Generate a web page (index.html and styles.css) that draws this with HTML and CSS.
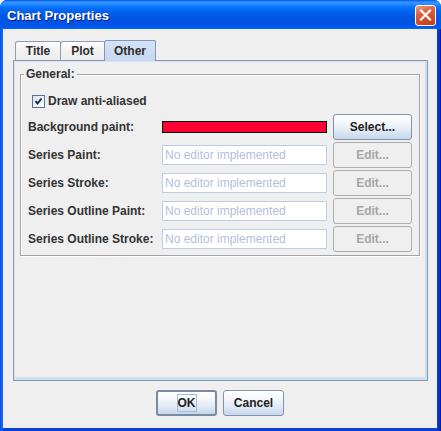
FILE: index.html
```html
<!DOCTYPE html>
<html lang="en">
<head>
<meta charset="utf-8">
<title>Chart Properties</title>
<link rel="stylesheet" href="styles.css">
</head>
<body>
<div class="window">
  <div class="titlebar">
    <span class="title">Chart Properties</span>
    <button class="close" aria-label="Close">
      <svg width="19" height="19" viewBox="0 0 19 19"><path d="M5 4.5 L14 13.5 M14 4.5 L5 13.5" stroke="#fff" stroke-width="2.2" stroke-linecap="square"/></svg>
    </button>
  </div>
  <div class="client">
    <div class="tabs">
      <div class="tab tab-title">Title</div>
      <div class="tab tab-plot">Plot</div>
      <div class="tab tab-other selected">Other</div>
    </div>
    <div class="panel">
      <fieldset class="group">
        <legend>General:</legend>
        <label class="check-row">
          <span class="checkbox"><svg width="11" height="11" viewBox="0 0 11 11"><path d="M2.5 5 L4.5 7.5 L8.5 2.5" fill="none" stroke="#1b2a44" stroke-width="2"/></svg></span>
          Draw anti-aliased
        </label>
        <div class="props">
          <span class="label">Background paint:</span>
          <span class="swatch"></span>
          <button class="btn">Select...</button>

          <span class="label">Series Paint:</span>
          <input class="field" type="text" value="No editor implemented" disabled>
          <button class="btn" disabled>Edit...</button>

          <span class="label">Series Stroke:</span>
          <input class="field" type="text" value="No editor implemented" disabled>
          <button class="btn" disabled>Edit...</button>

          <span class="label">Series Outline Paint:</span>
          <input class="field" type="text" value="No editor implemented" disabled>
          <button class="btn" disabled>Edit...</button>

          <span class="label">Series Outline Stroke:</span>
          <input class="field" type="text" value="No editor implemented" disabled>
          <button class="btn" disabled>Edit...</button>
        </div>
      </fieldset>
    </div>
    <div class="actions">
      <button class="btn action default"><span class="focus">OK</span></button>
      <button class="btn action">Cancel</button>
    </div>
  </div>
</div>
</body>
</html>
```
FILE: styles.css
```css
* { box-sizing: border-box; }

body {
  margin: 0;
  background: #ffffff;
  font-family: "Liberation Sans", Arial, sans-serif;
}

.window {
  width: 441px;
  height: 431px;
  display: flex;
  flex-direction: column;
  border-radius: 7px 7px 0 0;
  overflow: hidden;
  background: linear-gradient(to right, #0a4fe6 0, #0a4fe6 1px, #1563f2 1px, #1563f2 3px, #0a40d8 3px, #0a40d8 calc(100% - 4px), #0a3dd8 calc(100% - 4px), #002fc4 calc(100% - 1px), #001e9c calc(100% - 1px));
}

.titlebar {
  height: 29px;
  flex: none;
  display: flex;
  align-items: center;
  justify-content: space-between;
  padding: 2px 5px 0 7px;
  background: linear-gradient(to bottom, #0058ee 0%, #3a93ff 8%, #288eff 14%, #127dff 20%, #036ffc 28%, #0262ee 40%, #0057e5 60%, #0054e3 75%, #0055eb 90%, #005bf5 95%, #026afe 100%);
}

.title {
  color: #ffffff;
  font-weight: bold;
  font-size: 13px;
  text-shadow: 1px 1px 0 #0a1c80;
}

.close {
  width: 21px;
  height: 21px;
  padding: 0;
  margin: 0;
  border: 1px solid #ffffff;
  border-radius: 3px;
  background: linear-gradient(160deg, #f09a7c 0%, #e0603c 35%, #d24a26 70%, #c03a18 100%);
  display: flex;
  align-items: center;
  justify-content: center;
}

.client {
  flex: 1;
  display: flex;
  flex-direction: column;
  margin: 0 4px 3px 3px;
  padding: 11px 9px 12px 10px;
  background: #efefef;
}

.tabs {
  display: flex;
  align-items: flex-end;
  height: 20px;
  padding-left: 2px;
  position: relative;
  z-index: 1;
}

.tab {
  height: 19px;
  border: 1px solid #8c9db4;
  border-bottom: none;
  border-radius: 3px 2px 0 0;
  background: linear-gradient(to bottom, #ffffff, #f3f3f3 40%, #ececec);
  font-size: 12px;
  font-weight: bold;
  color: #2e2e2e;
  display: flex;
  align-items: center;
  justify-content: center;
  margin-left: -1px;
}

.tab-title { width: 46px; margin-left: 0; }
.tab-plot { width: 45px; }
.tab-other { width: 52px; }

.tab.selected {
  height: 21px;
  margin-bottom: -1px;
  padding-bottom: 1px;
  border-color: #7f98b8;
  background: linear-gradient(to bottom, #d4e2f4, #c6d8ef);
}

.panel {
  flex: 1;
  border: 1px solid #8699b2;
  background: #efefef;
  box-shadow: inset 1px 1px 0 #d8e4f4, inset -2px -3px 0 #cfdef2;
  padding: 6px 7px 0 6px;
}

.group {
  margin: 0;
  padding: 7px 0 3px 0;
  min-width: 0;
  border: 1px solid #a3a3a3;
  box-shadow: inset 1px 1px 0 #ffffff, 1px 1px 0 #ffffff;
}

.group legend {
  margin-left: 3px;
  padding: 0 2px;
  font-size: 12px;
  font-weight: bold;
  line-height: 14px;
  color: #333333;
  background: #efefef;
}

.check-row {
  display: flex;
  align-items: center;
  height: 26px;
  padding-left: 11px;
  gap: 3px;
  font-size: 12px;
  font-weight: bold;
  color: #333333;
}

.checkbox {
  width: 13px;
  height: 13px;
  border: 1px solid #56739a;
  background: linear-gradient(135deg, #dde3ec, #ffffff);
  display: flex;
  align-items: center;
  justify-content: center;
}

.props {
  display: grid;
  grid-template-columns: 128px 165px 79px;
  grid-auto-rows: 26px;
  column-gap: 6px;
  row-gap: 2px;
  align-items: center;
  padding-left: 7px;
}

.label {
  font-size: 12px;
  font-weight: bold;
  color: #333333;
  white-space: nowrap;
}

.swatch {
  width: 165px;
  height: 12px;
  border: 1px solid #000000;
  background: #ff0033;
}

.field {
  width: 165px;
  height: 20px;
  margin: 0;
  padding: 0 2px;
  border: 1px solid #bccde6;
  background: #ffffff;
  color: #b3c1da;
  font-family: "Liberation Sans", Arial, sans-serif;
  font-size: 12px;
  opacity: 1;
}

.btn {
  height: 26px;
  margin: 0;
  padding: 0;
  border: 1px solid #7f93ab;
  border-radius: 3px;
  background: linear-gradient(to bottom, #ffffff 0%, #f3f6fb 35%, #dde7f4 70%, #c7d6ec 100%);
  font-family: "Liberation Sans", Arial, sans-serif;
  font-size: 12px;
  font-weight: bold;
  color: #222222;
}

.btn:disabled {
  border-color: #adadad;
  background: #efefef;
  color: #a6a6a6;
}

.actions {
  display: flex;
  justify-content: center;
  gap: 6px;
  margin-top: 9px;
  padding-right: 1px;
}

.action {
  width: 61px;
}

.action.default {
  border: 2px solid #788ba3;
  display: flex;
  align-items: center;
  justify-content: center;
}

.focus {
  border: 1px solid #a9bedc;
  height: 18px;
  line-height: 16px;
  padding: 0;
}
```
